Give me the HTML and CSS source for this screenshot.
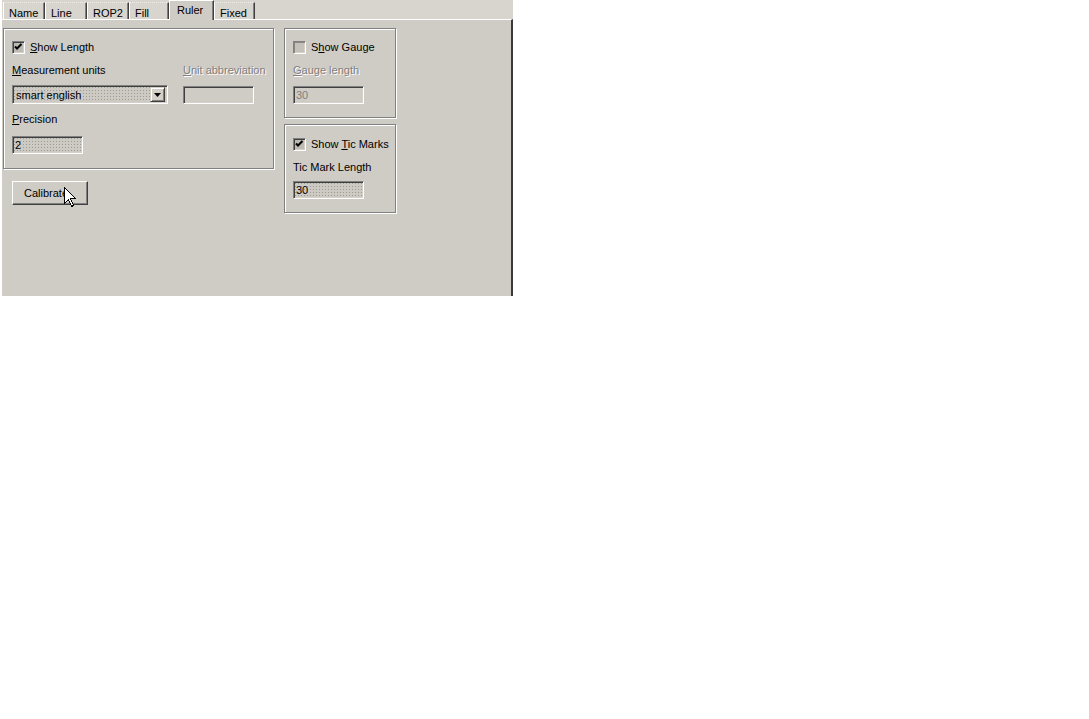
FILE: index.html
```html
<!DOCTYPE html>
<html>
<head>
<meta charset="utf-8">
<link rel="stylesheet" href="styles.css">
</head>
<body>
<div class="dialog">
  <div class="tabstrip">
    <div class="tab w42">Name</div>
    <div class="tab w42">Line</div>
    <div class="tab w42">ROP2</div>
    <div class="tab w40">Fill</div>
    <div class="tab active">Ruler</div>
    <div class="tab w41">Fixed</div>
  </div>
  <div class="panel">
    <div class="leftcol">
      <div class="group g1">
        <div class="checkrow">
          <span class="check checked"><svg width="13" height="13" viewBox="0 0 13 13"><path d="M3 5.5 L5 7.5 L9.5 3" fill="none" stroke="#000" stroke-width="2"/></svg></span>
          <span class="lbl"><u>S</u>how Length</span>
        </div>
        <div class="grid">
          <div class="lbl"><u>M</u>easurement units</div>
          <div class="lbl disabled"><u>U</u>nit abbreviation</div>
          <div class="combo">
            <span class="combotext">smart english</span>
            <span class="dropbtn"><svg width="7" height="4" viewBox="0 0 7 4"><path d="M0 0 H7 L3.5 4 Z" fill="#000"/></svg></span>
          </div>
          <div class="field plain abbr"></div>
        </div>
        <div class="lbl prec"><u>P</u>recision</div>
        <div class="field dotted precbox">2</div>
      </div>
      <div class="button">Calibrate</div>
    </div>
    <div class="rightcol">
      <div class="group g2">
        <div class="checkrow">
          <span class="check off"></span>
          <span class="lbl">S<u>h</u>ow Gauge</span>
        </div>
        <div class="lbl disabled sub"><u>G</u>auge length</div>
        <div class="field plain small dis">30</div>
      </div>
      <div class="group g3">
        <div class="checkrow">
          <span class="check checked"><svg width="13" height="13" viewBox="0 0 13 13"><path d="M3 5.5 L5 7.5 L9.5 3" fill="none" stroke="#000" stroke-width="2"/></svg></span>
          <span class="lbl">Show <u>T</u>ic Marks</span>
        </div>
        <div class="lbl sub3">Tic Mark Length</div>
        <div class="field dotted small tic">30</div>
      </div>
    </div>
  </div>
  <svg class="cursor" width="13" height="21" viewBox="0 0 13 21" shape-rendering="crispEdges">
    <path d="M0.5 0.5 V16.5 L4.5 12.5 L7.5 19.5 L9.5 18.5 L6.5 11.5 H11.5 Z" fill="#fff" stroke="#000" stroke-width="1"/>
  </svg>
</div>
</body>
</html>
```

FILE: styles.css
```css
html, body {
  margin: 0;
  padding: 0;
  background: #ffffff;
}
body {
  font-family: "Liberation Sans", Arial, sans-serif;
  font-size: 11px;
  line-height: 13px;
  color: #000;
}
.dialog {
  position: relative;
  width: 511px;
  height: 296px;
  margin-left: 2px;
  display: flex;
  flex-direction: column;
}
.tabstrip {
  height: 19px;
  background: #d8d5cf;
  display: flex;
  align-items: flex-end;
  padding-left: 1px;
  box-sizing: border-box;
}
.tab {
  height: 17px;
  box-sizing: border-box;
  padding: 4px 0 0 5px;
  border-left: 1px solid #fff;
  border-top: 1px dotted #eeeeea;
  border-right: 1px solid #404040;
  box-shadow: inset -1px 0 0 #808080;
  white-space: nowrap;
}
.w42 { width: 42px; }
.w40 { width: 40px; }
.w41 { width: 41px; }
.tab.active {
  width: 45px;
  height: 20px;
  margin-bottom: -1px;
  padding: 3px 0 0 7px;
  border-top: 1px solid #fff;
  background: #cfccc6;
  position: relative;
  z-index: 1;
}
.panel {
  flex: 1;
  background: #cfccc6;
  border-top: 1px solid #fff;
  border-right: 2px solid #3a3a3a;
  padding: 8px 0 0 1px;
  display: flex;
  gap: 10px;
}
.leftcol {
  width: 271px;
  display: flex;
  flex-direction: column;
}
.rightcol {
  width: 112px;
  display: flex;
  flex-direction: column;
  gap: 6px;
}
.group {
  box-sizing: border-box;
  border: 1px solid #808080;
  box-shadow: inset 1px 1px 0 #fff, 1px 1px 0 #fff;
  padding: 12px 0 0 8px;
  display: flex;
  flex-direction: column;
  align-items: flex-start;
}
.g1 { height: 141px; }
.g2 { height: 90px; }
.g3 { height: 89px; padding-top: 13px; }
.checkrow {
  display: flex;
  align-items: center;
  height: 13px;
  gap: 5px;
}
.check {
  width: 13px;
  height: 13px;
  box-sizing: border-box;
  border-top: 1px solid #808080;
  border-left: 1px solid #808080;
  border-bottom: 1px solid #fff;
  border-right: 1px solid #fff;
  box-shadow: inset 1px 1px 0 #404040, inset -1px -1px 0 #d4d0c8;
  background: #bdbab4;
  position: relative;
}
.check svg {
  position: absolute;
  left: -1px;
  top: -1px;
}
.check.off {
  background: #c4c1bb;
  box-shadow: inset 1px 1px 0 #8a8884, inset -1px -1px 0 #d4d0c8;
}
.lbl {
  white-space: nowrap;
}
.disabled {
  color: #808080;
  text-shadow: 1px 1px 0 #fff;
}
.grid {
  margin-top: 10px;
  display: grid;
  grid-template-columns: 156px 71px;
  column-gap: 15px;
  row-gap: 8px;
}
.combo {
  height: 19px;
  box-sizing: border-box;
  border-top: 1px solid #808080;
  border-left: 1px solid #808080;
  border-bottom: 1px solid #fff;
  border-right: 1px solid #fff;
  box-shadow: inset 1px 1px 0 #404040, inset -1px -1px 0 #d4d0c8;
  background-color: #cdcac4;
  background-image: radial-gradient(circle, #9c9a95 0.6px, transparent 0.9px);
  background-size: 3px 3px;
  display: flex;
  align-items: center;
  justify-content: space-between;
  padding: 0 2px 0 3px;
}
.combotext {
  padding-top: 2px;
}
.dropbtn {
  width: 15px;
  height: 15px;
  box-sizing: border-box;
  background: #d4d0c8;
  border-top: 1px solid #d4d0c8;
  border-left: 1px solid #d4d0c8;
  border-bottom: 1px solid #404040;
  border-right: 1px solid #404040;
  box-shadow: inset 1px 1px 0 #fff, inset -1px -1px 0 #808080;
  display: flex;
  align-items: center;
  justify-content: center;
}
.field {
  height: 18px;
  box-sizing: border-box;
  border-top: 1px solid #808080;
  border-left: 1px solid #808080;
  border-bottom: 1px solid #fff;
  border-right: 1px solid #fff;
  box-shadow: inset 1px 1px 0 #404040, inset -1px -1px 0 #d4d0c8;
  padding: 2px 0 0 2px;
}
.plain {
  background: #cfccc6;
}
.dotted {
  background-color: #cdcac4;
  background-image: radial-gradient(circle, #9c9a95 0.6px, transparent 0.9px);
  background-size: 3px 3px;
}
.abbr {
  margin-top: 1px;
}
.prec {
  margin-top: 9px;
}
.precbox {
  width: 71px;
  margin-top: 10px;
}
.small {
  width: 71px;
}
.dis {
  color: #808080;
  margin-top: 9px;
}
.sub {
  margin-top: 10px;
}
.sub3 {
  margin-top: 10px;
}
.tic {
  margin-top: 7px;
}
.button {
  margin: 12px 0 0 9px;
  width: 76px;
  height: 24px;
  box-sizing: border-box;
  border-top: 1px solid #fff;
  border-left: 1px solid #fff;
  border-bottom: 1px solid #404040;
  border-right: 1px solid #404040;
  box-shadow: inset -1px -1px 0 #808080;
  padding-right: 8px;
  display: flex;
  align-items: center;
  justify-content: center;
}
.cursor {
  position: absolute;
  left: 62px;
  top: 187px;
}
```
